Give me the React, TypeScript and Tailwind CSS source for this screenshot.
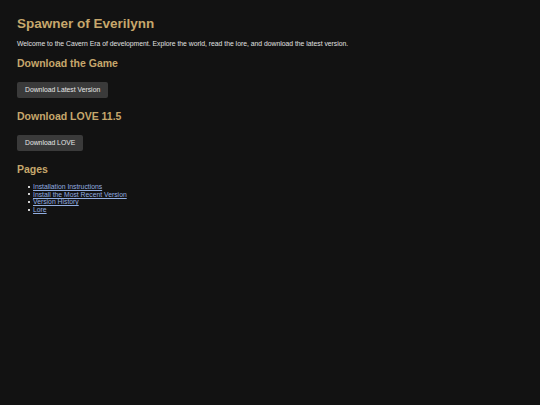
export default function App() {
  const links = [
    "Installation Instructions",
    "Install the Most Recent Version",
    "Version History",
    "Lore",
  ];
  return (
    <div
      className="min-h-[405px] w-full bg-[#121212] px-[17px] pt-[16px] text-[#e0e0e0]"
      style={{ fontFamily: '"Liberation Sans", Arial, sans-serif' }}
    >
      <h1 className="text-[13.5px] font-bold leading-[15px] text-[#c6a76c]">Spawner of Everilynn</h1>
      <p className="mt-[9px] text-[6.8px] leading-[8px]">
        Welcome to the Cavern Era of development. Explore the world, read the lore, and download the latest version.
      </p>
      <h2 className="mt-[9px] text-[10.5px] font-bold leading-[12px] text-[#c6a76c]">Download the Game</h2>
      <button className="mt-[13px] block h-[16px] rounded-[2px] bg-[#3a3a3a] px-[8px] text-[6.8px] leading-[16px] text-[#e6e6e6]">
        Download Latest Version
      </button>
      <h2 className="mt-[12px] text-[10.5px] font-bold leading-[12px] text-[#c6a76c]">Download LOVE 11.5</h2>
      <button className="mt-[13px] block h-[16px] rounded-[2px] bg-[#3a3a3a] px-[8px] text-[6.8px] leading-[16px] text-[#e6e6e6]">
        Download LOVE
      </button>
      <h2 className="mt-[12px] text-[10.5px] font-bold leading-[12px] text-[#c6a76c]">Pages</h2>
      <ul className="mt-[8px] pl-[11px] text-[6.8px] leading-[7.6px]">
        {links.map((l) => (
          <li key={l} className="flex items-center gap-[3px]">
            <span className="h-[2px] w-[2px] bg-[#d0d0d0]" />
            <a href="#" className="text-[#93aee0] underline">
              {l}
            </a>
          </li>
        ))}
      </ul>
    </div>
  );
}
